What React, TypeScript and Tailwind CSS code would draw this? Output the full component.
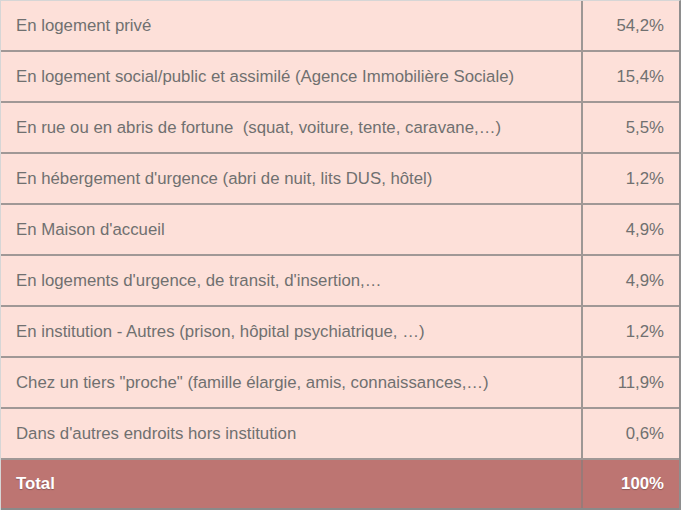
import React from 'react';

type Row = { label: string; value: string };

const rows: Row[] = [
  { label: 'En logement privé', value: '54,2%' },
  { label: 'En logement social/public et assimilé (Agence Immobilière Sociale)', value: '15,4%' },
  { label: 'En rue ou en abris de fortune  (squat, voiture, tente, caravane,…)', value: '5,5%' },
  { label: "En hébergement d'urgence (abri de nuit, lits DUS, hôtel)", value: '1,2%' },
  { label: "En Maison d'accueil", value: '4,9%' },
  { label: "En logements d'urgence, de transit, d'insertion,…", value: '4,9%' },
  { label: 'En institution - Autres (prison, hôpital psychiatrique, …)', value: '1,2%' },
  { label: 'Chez un tiers "proche" (famille élargie, amis, connaissances,…)', value: '11,9%' },
  { label: "Dans d'autres endroits hors institution", value: '0,6%' },
];

const App: React.FC = () => {
  return (
    <div className="h-[531px] w-[700px] bg-white" style={{ fontFamily: '"Liberation Sans", Arial, sans-serif' }}>
      <div className="w-[681px] border-t border-l border-[#d6d6d6] border-r-2 border-r-[#8e8e8e]">
        {rows.map((row) => (
          <div key={row.label} className="grid h-[51px] grid-cols-[582px_1fr] border-b-2 border-[#a09896] bg-[#fde0d9] text-[16.8px] text-[#707070]">
            <div className="flex items-center whitespace-pre border-r-2 border-[#9d9795] pl-[15px]">{row.label}</div>
            <div className="flex items-center justify-end pr-[15px]">{row.value}</div>
          </div>
        ))}
        <div className="grid h-[50px] grid-cols-[582px_1fr] border-b-2 border-[#8a8a8a] bg-[#bd7572] text-[16.8px] font-bold text-white [text-shadow:0_1px_1px_rgba(0,0,0,0.25)]">
          <div className="flex items-center border-r-2 border-[#9a7a78] pl-[15px]">Total</div>
          <div className="flex items-center justify-end pr-[15px]">100%</div>
        </div>
      </div>
    </div>
  );
};

export default App;
